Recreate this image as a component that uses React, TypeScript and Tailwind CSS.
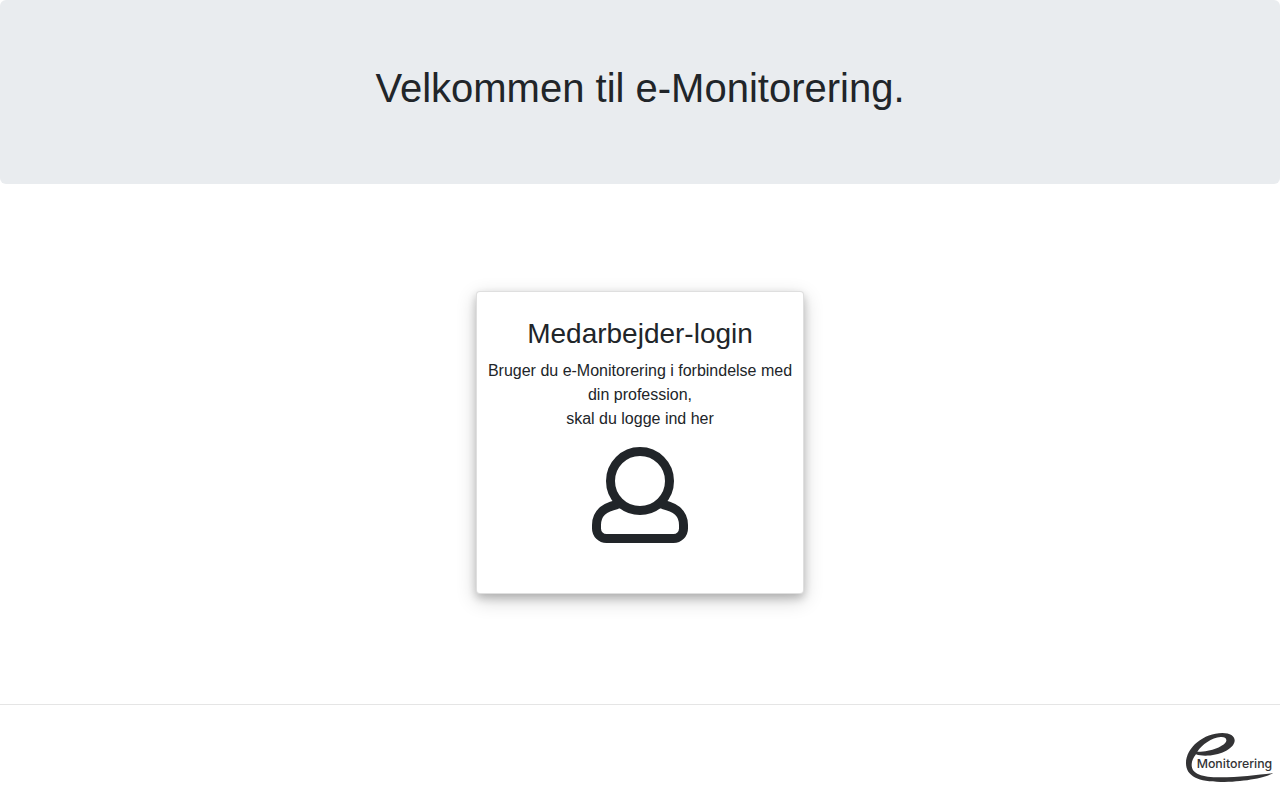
import React from 'react';

function UserIcon() {
    return (
        <svg viewBox="0 0 96 96" className="size-24" fill="none" stroke="currentColor" strokeWidth="9" aria-hidden="true">
            <circle cx="48" cy="34" r="29.5" />
            <path d="M29 56.200L25 57.500C12 60.500 4.500 66 4.500 78V81.500A10 10 0 0 0 14.500 91.500H81.500A10 10 0 0 0 91.500 81.500V78C91.500 66 84 60.500 71 57.500L67 56.200" />
        </svg>
    );
}

function Logo() {
    return (
        <svg viewBox="0 0 312 198" className="h-[66px] w-[104px]" fill="#333335" role="img" aria-label="e-Monitorering">
            <path
                fillRule="evenodd"
                d="M292 147C268 162 200 174 134 174C68 174 30 157 30 118C30 70 84 27 139 27C163 27 177 37 176 51C173 76 129 95 88 95C76 95 68 94 60 91C51 103 47 112 47 123C47 150 78 160 132 160C190 160 247 152 292 147ZM64 83C102 84 148 66 151 50C152 42 144 38 134 39C107 41 78 62 64 83Z"
            />
            <text x="62" y="131" fontSize="37" fontWeight="500" fontFamily="Inter, sans-serif">
                Monitorering
            </text>
        </svg>
    );
}

export default function App() {
    return (
        <div className="min-h-screen bg-white font-['Liberation_Sans',Arial,sans-serif] text-base text-[#212529]">
            <header className="rounded-md bg-[#e9ecef] px-8 pt-16 pb-18 text-center">
                <h1 className="text-[40px] leading-12">Velkommen til e-Monitorering.</h1>
            </header>

            <main className="flex justify-center px-4 pt-[107px] pb-[110px]">
                <a
                    href="#login"
                    className="flex w-82 max-w-full flex-col items-center rounded-sm border border-black/[0.125] bg-white px-2 pt-[25px] pb-[50px] text-center shadow-[0_4px_8px_0_rgba(0,0,0,0.2),0_6px_20px_0_rgba(0,0,0,0.19)]"
                >
                    <h2 className="mb-2 text-[28px] leading-[34px]">Medarbejder-login</h2>
                    <p className="mb-4 leading-6">
                        Bruger du e-Monitorering i forbindelse med din profession,
                        <br />
                        skal du logge ind her
                    </p>
                    <UserIcon />
                </a>
            </main>

            <footer className="flex justify-end border-t border-black/10 pt-[19px]">
                <Logo />
            </footer>
        </div>
    );
}
